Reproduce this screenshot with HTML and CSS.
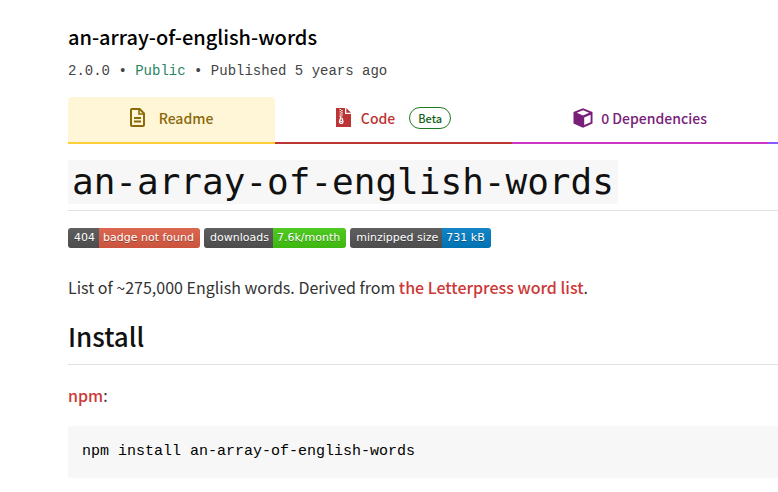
FILE: index.html
```html
<!DOCTYPE html>
<html lang="en">
<head>
<meta charset="utf-8">
<meta name="viewport" content="width=device-width, initial-scale=1">
<title>an-array-of-english-words</title>
<link rel="stylesheet" href="styles.css">
</head>
<body>
<main class="package">
  <header class="package-header">
    <h2 class="package-name">an-array-of-english-words</h2>
    <p class="package-meta">2.0.0 • <span class="public">Public</span> • Published 5 years ago</p>
  </header>
  <nav class="tabs">
    <a class="tab tab-readme" href="#readme">
      <svg class="icon" viewBox="0 0 15 19" width="15" height="19" fill="none" stroke="currentColor" stroke-width="2"><path d="M2 1H9.6L14 5.4V17Q14 18 13 18H2Q1 18 1 17V2Q1 1 2 1Z"/><path d="M9 1V6H14" stroke-width="1.6"/><path d="M4 10H11M4 13.5H11" stroke-width="1.8"/></svg>
      <span>Readme</span>
    </a>
    <a class="tab tab-code" href="#code">
      <svg class="icon" viewBox="0 0 15 19" width="15" height="19"><path fill="currentColor" d="M0 0H9V6H15V19H0ZM10.3 0L15 4.7H10.3Z"/><path fill="none" stroke="#fff" stroke-width="1.5" stroke-dasharray="1.1 1.1" d="M4.3 1V9M5.9 2.1V9"/><path fill="none" stroke="#fff" stroke-width="1.4" d="M5 8.5L3.5 13.5C3.4 16 7.1 16 6.9 13.5L6 10"/><path stroke="#fff" d="M4.4 13.5H6"/></svg>
      <span>Code</span>
      <span class="beta">Beta</span>
    </a>
    <a class="tab tab-deps" href="#dependencies">
      <svg class="icon" viewBox="0 0 20 20" width="20" height="20"><path fill="currentColor" d="M10 0.3L19.5 4V15.6L10 19.7L0.5 15.6V4Z"/><path fill="#fff" d="M10 2.3L16.2 4.8L10 7.5L3.8 4.8ZM11.2 9.5L17.6 6.8V14.2L11.2 17Z"/></svg>
      <span>0 Dependencies</span>
    </a>
    <a class="tab tab-dependents" href="#dependents" aria-label="Dependents"></a>
  </nav>
  <article class="readme" id="readme">
    <h1 class="readme-title"><code>an-array-of-english-words</code></h1>
    <p class="badges">
      <a class="badge" href="#build"><span class="label">404</span><span class="value red">badge not found</span></a>
      <a class="badge" href="#downloads"><span class="label">downloads</span><span class="value green">7.6k/month</span></a>
      <a class="badge" href="#size"><span class="label">minzipped size</span><span class="value blue">731 kB</span></a>
    </p>
    <p class="text">List of ~275,000 English words. Derived from <a href="#letterpress">the Letterpress word list</a>.</p>
    <h2 class="section-title">Install</h2>
    <p class="text"><a href="#npm">npm</a>:</p>
    <pre class="command"><code>npm install an-array-of-english-words</code></pre>
  </article>
</main>
</body>
</html>
```
FILE: styles.css
```css
* { box-sizing: border-box; }

body {
  margin: 0;
  background: #fff;
  color: #333;
  font-family: "Noto Sans CJK SC", "Noto Sans", sans-serif;
  font-size: 16px;
}

h1, h2, p, pre { margin: 0; }
a { text-decoration: none; }

.package { padding: 23px 0 14px 68px; }

.package-name {
  color: #000;
  font-size: 20px;
  font-weight: 500;
  line-height: 28px;
}

.package-meta {
  margin-top: 10px;
  color: #444;
  font-family: "Liberation Mono", monospace;
  font-size: 14px;
  line-height: 20px;
}

.public { color: #2a855f; }

.tabs {
  display: grid;
  grid-template-columns: 207fr 237fr 256fr 10fr;
  margin-top: 16px;
}

.tab {
  display: flex;
  align-items: center;
  justify-content: center;
  gap: 8px;
  height: 47px;
  padding-bottom: 4px;
  border-bottom: 2px solid;
  font-size: 14px;
  font-weight: 500;
  line-height: 20px;
}

.icon { flex: none; }

.tab-readme {
  gap: 14px;
  border-radius: 4px 4px 0 0;
  border-color: #ffcd3a;
  background: #fff5d7;
  color: #8a6a09;
}
.tab-code { gap: 10px; border-color: #bc3433; color: #bc3433; }
.tab-deps { border-color: #c836c3; color: #782079; }
.tab-dependents { border-color: #8956ff; }

.beta {
  margin-left: 4px;
  padding: 0 8px;
  border: 1px solid #1d791d;
  border-radius: 11px;
  color: #126512;
  font-size: 11px;
}

.readme-title {
  margin-top: 16px;
  padding-bottom: 6px;
  border-bottom: 1px solid #e1e1e1;
  color: #111;
  font-size: 36px;
  font-weight: 400;
  line-height: 44px;
}

.readme-title code {
  display: inline-block;
  padding: 0 4px;
  border-radius: 2px;
  background: #f7f7f7;
  font-family: "DejaVu Sans Mono", monospace;
  vertical-align: top;
}

.badges {
  display: flex;
  gap: 4px;
  margin-top: 17px;
}

.badge {
  display: flex;
  overflow: hidden;
  border-radius: 3px;
  color: #fff;
  font-family: "DejaVu Sans", Verdana, sans-serif;
  font-size: 11px;
  line-height: 20px;
  text-shadow: 0 1px rgba(1, 1, 1, 0.3);
}

.badge span {
  background-image: linear-gradient(rgba(187, 187, 187, 0.1), rgba(0, 0, 0, 0.1));
}
.label { padding: 0 4px 0 6px; background-color: #555; }
.value { padding: 0 6px 0 4px; }
.red { background-color: #e05d44; }
.green { background-color: #4c1; }
.blue { background-color: #007ec6; }

.text {
  margin-top: 25px;
  line-height: 28px;
}

.text a { color: #cb3837; font-weight: 500; }

.section-title {
  margin-top: 16px;
  padding-bottom: 9px;
  border-bottom: 1px solid #e1e1e1;
  color: #111;
  font-size: 26px;
  font-weight: 500;
  line-height: 38px;
}

.section-title + .text { margin-top: 16px; }

.command {
  margin-top: 17px;
  padding: 14px;
  border-radius: 2px;
  background: #f7f7f7;
  color: #000;
  font-family: "Liberation Mono", monospace;
  font-size: 15px;
  line-height: 24px;
  overflow: hidden;
}
.command code { font: inherit; }
```
